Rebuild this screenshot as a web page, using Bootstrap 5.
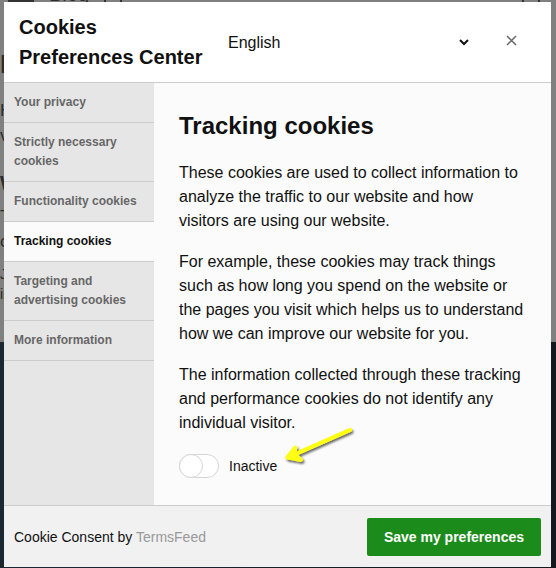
<!DOCTYPE html>
<html lang="en">
<head>
<meta charset="utf-8">
<meta name="viewport" content="width=device-width, initial-scale=1">
<title>Cookies Preferences Center</title>
<link href="https://cdn.jsdelivr.net/npm/bootstrap@5.3.0/dist/css/bootstrap.min.css" rel="stylesheet">
<style>
body { font-family: "Liberation Sans", Arial, sans-serif; font-size: 16px; line-height: 24px; color: #111; background: #808080; }
.stage { min-height: 100vh; padding: 2px 5px 1px 4px; }
/* dimmed page under the dialog */
.under { inset: 0; color: #2a2c2e; z-index: 0; }
.under-main { height: 342px; }
.under-foot { background: linear-gradient(90deg, #1c2831, #14181f); }
.under-logo { width: 26px; height: 2px; background: #333; margin-left: 8px; }
.under-nav { height: 50px; gap: 15px; }
.under-nav span { line-height: 24px; margin-top: -18px; font-size: 20px; }
.under-mark { width: 18px; height: 2px; border: solid #333; border-width: 0 2px; }
.under-title { font-size: 26px; line-height: 28px; margin-bottom: 20px; }
.under-sub { font-size: 20px; line-height: 26px; margin: 22px 0 8px; }
.under-text { font-size: 17px; line-height: 25px; }
.under-note { font-size: 14px; line-height: 20px; margin-top: 10px; }
/* dialog */
.consent { z-index: 1; background: #fff; }
.consent-head { min-height: 81px; padding: 10px 24px 10px 15px; border-bottom: 1px solid #ccc; }
.consent-title { width: 190px; font-size: 20px; line-height: 30px; }
.consent-lang { width: 248px; padding: 0; background: #fff; color: #111; font-size: 16px; }
.consent-close { padding: 10px; margin: -3px 0 0 24px; line-height: 0; color: #666; }
.consent-tabs { width: 150px; background: #e6e6e6; }
.tab { padding: 10px; border-bottom: 1px solid #ccc; background: #e6e6e6; color: #666; font-size: 12px; line-height: 19px; font-weight: 700; text-align: left; }
.tab.active { background: #fbfbfb; color: #111; }
.consent-main { background: #fbfbfb; padding: 25px 25px 27px; }
.consent-main h1 { font-size: 24px; line-height: 36px; margin-bottom: 17px; }
.consent-main p { margin-bottom: 17px; }
.switch-row { margin-top: 19px; gap: 10px; font-size: 14px; }
.toggle { appearance: none; width: 40px; height: 24px; margin: 0; border: 1px solid #d5d5d5; border-radius: 12px; background: #fff; }
.toggle::before { content: ""; display: block; width: 24px; height: 24px; margin: -1px; border: 1px solid #d5d5d5; border-radius: 50%; background: #fff; }
.toggle:checked::before { margin-left: 15px; }
.pointer { left: 104px; top: -28px; }
.consent-foot { background: #f1f1f1; border-top: 1px solid #ccc; padding: 12px 10px 11px; font-size: 14px; }
.consent-foot a { color: #999; }
.save { background: #1b8c1b; color: #fff; border-radius: 2px; padding: 7px 17px; font-size: 14px; line-height: 24px; font-weight: 700; }
</style>
</head>
<body>
<div class="stage position-relative d-flex flex-column">
  <div class="under position-absolute d-flex flex-column overflow-hidden" aria-hidden="true">
    <div class="under-main overflow-hidden">
      <div class="under-nav d-flex pe-3"><div class="under-logo"></div><span>Blog</span><div class="under-mark"></div><div class="under-mark ms-auto"></div></div>
      <div class="under-title fw-bold">H</div>
      <div class="under-text">H<br>v</div>
      <div class="under-sub fw-bold">W</div>
      <div class="under-text">T<br>c</div>
      <div class="under-note">J<br>in</div>
    </div>
    <div class="under-foot flex-grow-1"></div>
  </div>

  <div class="consent position-relative d-flex flex-column flex-grow-1" role="dialog" aria-labelledby="dlg-title">
    <header class="consent-head d-flex align-items-center">
      <h2 class="consent-title fw-bold mb-0 me-auto" id="dlg-title">Cookies Preferences Center</h2>
      <select class="consent-lang border-0" aria-label="Language"><option>English</option></select>
      <button class="consent-close btn border-0" type="button" aria-label="Close">
        <svg width="11" height="11" viewBox="0 0 11 11" fill="none" stroke="currentColor" stroke-width="1.5"><path d="M1 1l9 9M10 1l-9 9"/></svg>
      </button>
    </header>

    <div class="d-flex flex-grow-1">
      <nav class="consent-tabs d-flex flex-column flex-shrink-0">
        <button class="tab border-top-0 border-start-0 border-end-0" type="button">Your privacy</button>
        <button class="tab border-top-0 border-start-0 border-end-0" type="button">Strictly necessary cookies</button>
        <button class="tab border-top-0 border-start-0 border-end-0" type="button">Functionality cookies</button>
        <button class="tab active border-top-0 border-start-0 border-end-0" type="button">Tracking cookies</button>
        <button class="tab border-top-0 border-start-0 border-end-0" type="button">Targeting and advertising cookies</button>
        <button class="tab border-top-0 border-start-0 border-end-0" type="button">More information</button>
      </nav>
      <main class="consent-main flex-grow-1">
        <h1 class="fw-bold">Tracking cookies</h1>
        <p>These cookies are used to collect information to analyze the traffic to our website and how visitors are using our website.</p>
        <p>For example, these cookies may track things such as how long you spend on the website or the pages you visit which helps us to understand how we can improve our website for you.</p>
        <p class="mb-0">The information collected through these tracking and performance cookies do not identify any individual visitor.</p>
        <div class="switch-row position-relative d-flex align-items-center">
          <input class="toggle" type="checkbox" role="switch" id="tracking">
          <label for="tracking">Inactive</label>
          <svg class="pointer position-absolute" width="76" height="44" viewBox="0 0 76 44" aria-hidden="true">
            <defs><filter id="sh" x="-20%" y="-20%" width="150%" height="160%"><feDropShadow dx="1.5" dy="2" stdDeviation="1" flood-color="#000" flood-opacity=".6"/></filter></defs>
            <path filter="url(#sh)" fill="none" stroke="#ffff14" stroke-linecap="round" stroke-linejoin="round" stroke-width="4" d="M67 4L7 30.500"/>
            <path fill="#ffff14" stroke="#ffff14" stroke-linejoin="round" stroke-width="1" filter="url(#sh)" d="M3 30.500L10.500 21Q12.500 19 14 21L13 26L17 31L19 32.500Q20.500 35 18 35.500L4 33Q2 32.500 3 30.500Z"/>
            <path fill="none" stroke="#ffff14" stroke-linecap="round" stroke-width="4" d="M67 4L9 29.500"/>
          </svg>
        </div>
      </main>
    </div>

    <footer class="consent-foot d-flex align-items-center justify-content-between">
      <div>Cookie Consent by <a class="text-decoration-none" href="#">TermsFeed</a></div>
      <button class="save border-0" type="button">Save my preferences</button>
    </footer>
  </div>
</div>
<script src="https://cdn.jsdelivr.net/npm/bootstrap@5.3.0/dist/js/bootstrap.bundle.min.js"></script>
</body>
</html>
